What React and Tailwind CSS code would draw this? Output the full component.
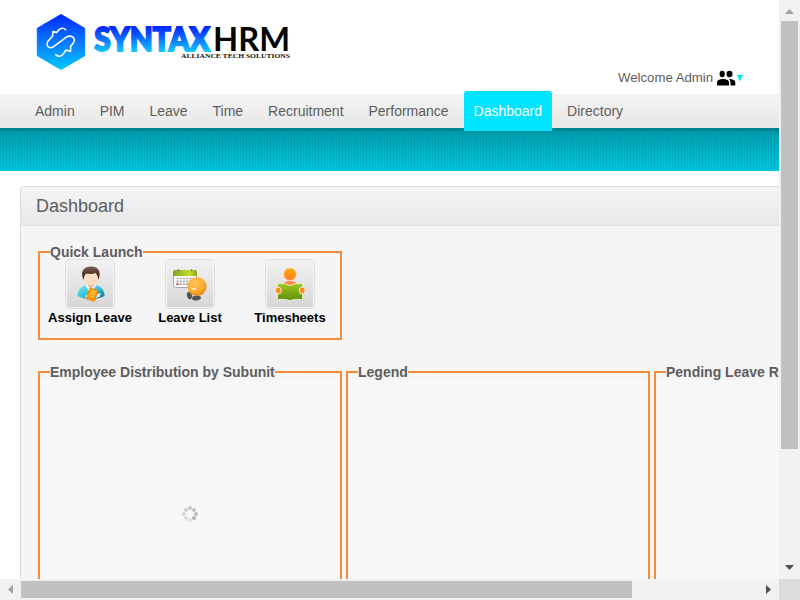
import React from "react";

const NAV = ["Admin", "PIM", "Leave", "Time", "Recruitment", "Performance", "Dashboard", "Directory"];

function Logo() {
  return (
    <svg width="264" height="66" viewBox="30 8 264 66" className="block">
      <defs>
        <linearGradient id="hex" x1="0" y1="0" x2="0" y2="1">
          <stop offset="0" stopColor="#0028ff" />
          <stop offset="0.5" stopColor="#0a78ff" />
          <stop offset="1" stopColor="#00c8ff" />
        </linearGradient>
        <linearGradient id="word" gradientUnits="userSpaceOnUse" x1="0" y1="27" x2="0" y2="51">
          <stop offset="0" stopColor="#0028ff" />
          <stop offset="0.25" stopColor="#0a48ff" />
          <stop offset="1" stopColor="#10c4ff" />
        </linearGradient>
      </defs>
      <path d="M61 14.5 L84.7 28.3 V55.7 L61 69.5 L37.3 55.7 V28.3 Z" fill="url(#hex)" stroke="url(#hex)" strokeWidth="1" strokeLinejoin="round" />
      <path
        d="M65.7 29.8 C63.5 27.6 60.8 27.8 58.6 30.1 L56.7 32.6 L53 31.5 L52.5 36.3 L48.5 40.5 C46 43.3 46.6 46.8 50 47.6 C52 48.1 53.2 47.1 55 45.6 L66 37.4 C69.3 35.2 73.2 35.8 74.2 39 C75 42 72.6 44 70.7 46 L70.5 51.5 L66 50 L63.5 53.6 C61.3 56.7 58.6 57.3 55.7 54.7"
        fill="none"
        stroke="#fff"
        strokeWidth="1.6"
        strokeLinecap="round"
        strokeLinejoin="round"
      />
      <text x="94.3" y="50.5" className="font-['Lato',sans-serif] text-[31.5px] font-black" fill="url(#word)" stroke="url(#word)" strokeWidth="1.9" textLength="115.5" lengthAdjust="spacingAndGlyphs">SYNTAX</text>
      <text x="213" y="51" className="font-['Lato',sans-serif] text-[33px] font-bold" fill="#050505" textLength="77" lengthAdjust="spacingAndGlyphs">HRM</text>
      <text x="181" y="58" className="font-['Liberation_Serif',serif] text-[7px] font-bold" fill="#111" textLength="109" lengthAdjust="spacingAndGlyphs">ALLIANCE TECH SOLUTIONS</text>
    </svg>
  );
}

function AssignIcon() {
  return (
    <svg width="48" height="48" viewBox="0 0 48 48">
      <defs>
        <linearGradient id="shirt" x1="0" y1="0" x2="1" y2="1">
          <stop offset="0" stopColor="#7be4f0" />
          <stop offset="0.5" stopColor="#2fc3da" />
          <stop offset="1" stopColor="#0b6f8c" />
        </linearGradient>
        <linearGradient id="hair" x1="0" y1="0" x2="0" y2="1">
          <stop offset="0" stopColor="#806050" />
          <stop offset="1" stopColor="#2c100a" />
        </linearGradient>
      </defs>
      <path d="M11.5 36 C11.5 30 15 26 20 25.500 L30 25.500 C35 26 38.500 30 38.500 36 Q33 39 25 39 Q17 39 11.500 36Z" fill="url(#shirt)" />
      <path d="M19.500 25.500 L24 33 L30.500 25.500 L28 23 H22Z" fill="#f4f8fa" />
      <path d="M21.500 21 H28.500 V25.500 L25 28.500 L21.500 25.500Z" fill="#e8b792" />
      <ellipse cx="25" cy="17.500" rx="6.800" ry="8" fill="#fbdcc0" />
      <path d="M17.500 20 C13.500 10 19 6.500 25 6.500 C32 6.500 36 11 32.300 20 C32 16 31 14 29 13 C25 15 21 13 19.500 14 Q18 16 17.500 20Z" fill="url(#hair)" />
      <path d="M23.800 28 L32 30.300 L28.600 41.500 L19.800 38.700Z" fill="#f79a0c" stroke="#e97f06" strokeWidth="0.7" strokeLinejoin="round" />
      <path d="M25 30.800 L29.800 32.200 M24.200 33.300 L29 34.700 M23.400 35.800 L28 37.200" stroke="#ffe07a" strokeWidth="0.9" />
      <path d="M31 34 L34.500 33 L34 36.500 L30 38Z" fill="#fbdcc0" />
      <path d="M19 36 L21.500 34.500 L20.500 38Z" fill="#fbdcc0" />
    </svg>
  );
}

function LeaveIcon() {
  return (
    <svg width="48" height="48" viewBox="0 0 48 48">
      <defs>
        <linearGradient id="cal" x1="0" y1="0" x2="1" y2="0">
          <stop offset="0" stopColor="#7da81d" />
          <stop offset="0.7" stopColor="#c3da2a" />
          <stop offset="1" stopColor="#84a51a" />
        </linearGradient>
        <radialGradient id="ball" cx="0.4" cy="0.3" r="0.7">
          <stop offset="0" stopColor="#ffc45c" />
          <stop offset="0.7" stopColor="#fda92a" />
          <stop offset="1" stopColor="#ee8216" />
        </radialGradient>
      </defs>
      <rect x="7.5" y="10.5" width="23" height="17" rx="2" fill="#fafafa" stroke="#a8a8a8" />
      <path d="M7 16 V12 Q7 10 9 10 H29 Q31 10 31 12 V16Z" fill="url(#cal)" />
      <path d="M12.500 9 V11.500 M25.500 9 V11.500" stroke="#888" strokeWidth="1.6" />
      <path d="M10.500 18.500 H28 M10.500 21.300 H28 M10.500 24.200 H28" stroke="#a8a8a8" strokeWidth="1.7" strokeDasharray="2 1.2" />
      <path d="M10.500 24.200 h2" stroke="#e64a35" strokeWidth="2" />
      <ellipse cx="23.500" cy="35.500" rx="2.500" ry="3.700" fill="#555" transform="rotate(-15 23.5 35.5)" />
      <ellipse cx="30.500" cy="38" rx="4.500" ry="2.500" fill="#555" transform="rotate(-8 30.5 38)" />
      <circle cx="31" cy="26.500" r="9.500" fill="url(#ball)" />
      <path d="M24.500 27.500 q2.500 2.400 5.500 1" fill="none" stroke="#fff2c8" strokeWidth="1.4" />
    </svg>
  );
}

function TimesheetIcon() {
  return (
    <svg width="48" height="48" viewBox="0 0 48 48">
      <defs>
        <linearGradient id="head" x1="0" y1="0" x2="0" y2="1">
          <stop offset="0" stopColor="#ffae00" />
          <stop offset="1" stopColor="#ff7a1c" />
        </linearGradient>
        <linearGradient id="book" x1="0" y1="0" x2="0" y2="1">
          <stop offset="0" stopColor="#9fcb1e" />
          <stop offset="1" stopColor="#5b8d0a" />
        </linearGradient>
      </defs>
      <path d="M16.500 24.500 Q18.500 21 24 21 Q29.500 21 31.500 24.500 L24 25.500Z" fill="#ff8440" />
      <circle cx="24" cy="14.200" r="6.300" fill="url(#head)" stroke="#f3e3d4" strokeWidth="0.6" />
      <path d="M11.500 23.500 Q19 23 24 25.500 Q29 23 36.500 23.500 V39.500 Q29 38.500 24 40.500 Q19 38.500 11.500 39.500Z" fill="url(#book)" stroke="#edf2dd" strokeWidth="0.8" />
      <path d="M24 26 V40" stroke="#7da818" strokeWidth="0.8" />
      <ellipse cx="12.300" cy="30.500" rx="3" ry="3.500" fill="#ff8b19" stroke="#f5eee4" strokeWidth="1" />
      <ellipse cx="36.200" cy="30.500" rx="3" ry="3.500" fill="#ff8b19" stroke="#f5eee4" strokeWidth="1" />
    </svg>
  );
}

function Launch({ label, children }) {
  return (
    <div className="flex w-[100px] flex-col items-center">
      <div className="h-[50px] w-[50px] rounded-[5px] border border-[#dfdfdf] bg-linear-to-b from-[#f2f2f2] to-[#d6d6d6] shadow-[inset_0_0_0_1px_#f3f3f3]">{children}</div>
      <div className="text-[13px] leading-[17px] font-bold whitespace-nowrap text-black">{label}</div>
    </div>
  );
}

const DOTS = [
  [9, 3, "#c8c9c2"], [13, 5, "#c2c3bc"], [15, 9, "#b9bab3"], [13, 13, "#b1b2ab"],
  [9, 15, "#e2e2dd"], [5, 13, "#dcdcd7"], [3, 9, "#d5d6d0"], [5, 5, "#cecfc8"],
];

function Panel({ title, children }) {
  return (
    <fieldset className="h-[336px] w-[304px] min-w-0 shrink-0 border-2 border-[#f28c38] px-0">
      <legend className="ml-[10px] h-[16px] text-[14px] leading-[16px] font-bold whitespace-nowrap text-[#5d5d5d]">{title}</legend>
      <div className="flex h-[310px] justify-center bg-[#f7f7f7] pt-[125px]">{children}</div>
    </fieldset>
  );
}

export default function App() {
  return (
    <div className="grid h-[600px] w-[800px] grid-cols-[779px_21px] grid-rows-[579px_21px] overflow-hidden bg-white font-['Liberation_Sans',Arial,sans-serif] text-[#5d5d5d]">
      <main className="flex min-w-0 flex-col overflow-hidden">
        <header className="flex h-[94px] shrink-0 items-start justify-between pt-2 pl-[30px]">
          <Logo />
          <div className="mt-[60px] mr-[35px] flex h-5 items-center">
            <span className="mr-[5px] w-[94px] text-[13.2px] whitespace-nowrap">Welcome Admin</span>
            <svg width="27" height="16" viewBox="0 0 27 16">
              <ellipse cx="5.200" cy="4" rx="2.600" ry="3.200" />
              <ellipse cx="12.500" cy="4" rx="3" ry="3.200" />
              <path d="M0 15.500 V12.500 Q0 9 6 9 Q12 9 12 12.500 V15.500Z M12 8.800 Q18.300 9.300 18.300 12.500 V15.500 H13.500 V12.500 Q13.500 10.300 12 8.800Z" />
              <path d="M20 5 H26 L23 11.500Z" fill="#00e5ff" />
            </svg>
          </div>
        </header>
        <nav className="z-10 flex h-[34px] shrink-0 bg-linear-to-b from-[#f4f4f4] to-[#e7e7e7] pl-[25px] text-[14px] leading-[34px]">
          {NAV.map((item) => (
            <a key={item} className={item === "Dashboard" ? "-mt-[3px] mr-[5px] h-[40px] rounded-t-[3px] bg-[#00e5ff] px-[10px] pt-[3px] text-white" : "mr-[4.95px] px-[10px]"}>{item}</a>
          ))}
        </nav>
        <div className="h-[43px] shrink-0 border-t-[3px] border-[#00838f] bg-[repeating-linear-gradient(90deg,rgba(0,90,110,0.13)_0px,rgba(0,90,110,0.13)_1px,transparent_1px,transparent_3px),linear-gradient(#009bab,#00c8e0)]" />
        <section className="mt-[15px] ml-[20px] h-[600px] w-[1000px] shrink-0 rounded-[3px] border border-[#dedede] bg-[#f5f5f5]">
          <h1 className="h-[39px] border-b border-[#dedede] bg-linear-to-b from-[#f4f4f4] to-[#e8e8e8] pl-[15px] text-[18px] leading-[38px]">Dashboard</h1>
          <div className="pt-[18px] pl-[17px]">
            <fieldset className="h-[96px] w-[304px] border-2 border-[#f28c38] px-0">
              <legend className="ml-[10px] h-[16px] text-[14px] leading-[16px] font-bold whitespace-nowrap">Quick Launch</legend>
              <div className="-mt-[1px] flex">
                <Launch label="Assign Leave"><AssignIcon /></Launch>
                <Launch label="Leave List"><LeaveIcon /></Launch>
                <Launch label="Timesheets"><TimesheetIcon /></Launch>
              </div>
            </fieldset>
            <div className="mt-[24px] flex gap-1">
              <Panel title="Employee Distribution by Subunit">
                <svg width="18" height="18" viewBox="0 0 18 18">
                  {DOTS.map(([x, y, color]) => <circle key={`${x}-${y}`} cx={x} cy={y} r="2" fill={color} />)}
                </svg>
              </Panel>
              <Panel title="Legend" />
              <Panel title="Pending Leave Requests" />
            </div>
          </div>
        </section>
      </main>
      <div className="flex flex-col items-center bg-[#f1f1f1]">
        <svg width="21" height="21"><path d="M6 14 L10.500 9 L15 14Z" fill="#a3a3a3" /></svg>
        <div className="mb-auto h-[428px] w-[17px] bg-[#c1c1c1]" />
        <svg width="21" height="21"><path d="M6 7 H15 L10.500 12Z" fill="#505050" /></svg>
      </div>
      <div className="flex items-center bg-[#f1f1f1]">
        <svg width="21" height="21"><path d="M13 6 V15 L8 10.500Z" fill="#a3a3a3" /></svg>
        <div className="mr-auto h-[17px] w-[611px] bg-[#c1c1c1]" />
        <svg width="21" height="21"><path d="M8 6 V15 L13 10.500Z" fill="#505050" /></svg>
      </div>
      <div className="bg-[#dcdcdc]" />
    </div>
  );
}
